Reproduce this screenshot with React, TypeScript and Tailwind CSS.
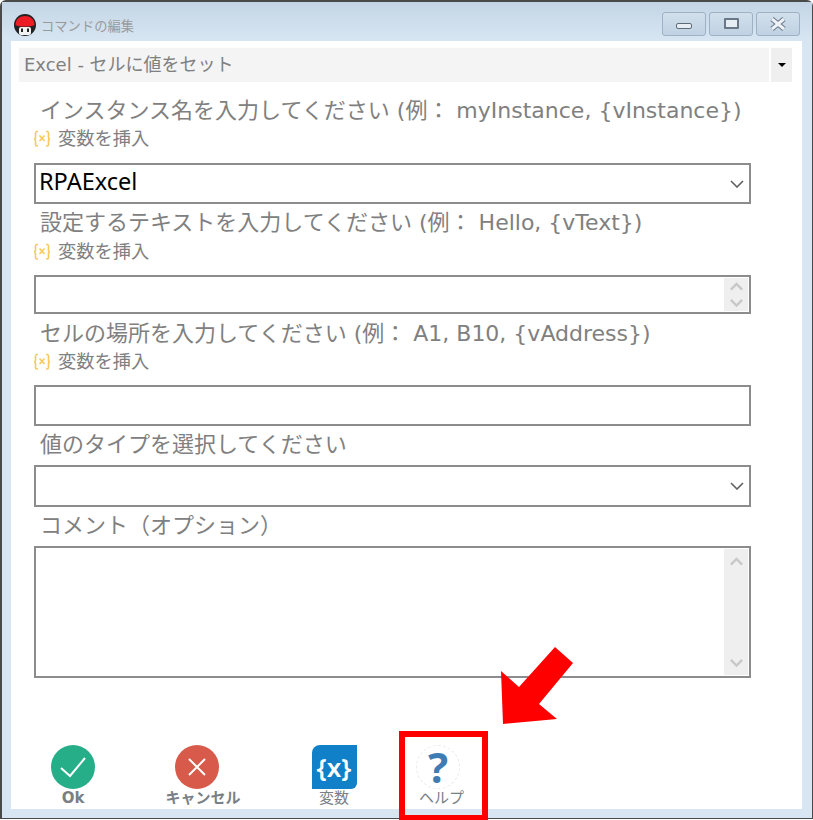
import React from "react";

function XIcon() {
  return (
    <svg width="18" height="20" viewBox="0 0 18 20" fill="none" stroke="#f8c95a" strokeWidth="1.6">
      <path d="M5 2.5H3.5C2.5 2.5 2.5 3.5 2.5 4.5V8C2.5 9 2 10 1 10C2 10 2.5 11 2.5 12V15.5C2.5 16.5 3 17 4 17H5" />
      <path d="M13 2.5H14.5C15.5 2.5 15.5 3.5 15.5 4.5V8C15.5 9 16 10 17 10C16 10 15.5 11 15.5 12V15.5C15.5 16.5 15 17 14 17H13" />
      <path d="M6.5 6.5L11.5 12M11.5 6.5L6.5 12" />
    </svg>
  );
}

function Insert() {
  return (
    <div className="flex items-center h-[28px] pl-[22px] gap-[7px] text-[18.3px] text-[#808080]">
      <XIcon />
      <span className="leading-[32px]">変数を挿入</span>
    </div>
  );
}

function Label({ children }: { children: React.ReactNode }) {
  return <div className="h-[30px] leading-[32px] pl-[29px] text-[22px] text-[#808080] whitespace-nowrap">{children}</div>;
}

function Chevron({ up, color = "#c8c8c8", size = 16 }: { up?: boolean; color?: string; size?: number }) {
  return (
    <svg width={size} height={size * 0.7} viewBox="0 0 16 11" fill="none" stroke={color} strokeWidth="2.6">
      <path d={up ? "M2 9L8 3L14 9" : "M2 2L8 8L14 2"} />
    </svg>
  );
}

function Box({ h, children }: { h: string; children?: React.ReactNode }) {
  return (
    <div className={`ml-[23px] w-[717px] ${h} border-2 border-[#8c8c8c] bg-white flex items-stretch`}>{children}</div>
  );
}

function SelectBox({ h, text }: { h: string; text?: string }) {
  return (
    <Box h={h}>
      <div className="flex-1 pl-[3px] text-[23.5px] leading-[32px] text-black font-['Noto_Sans','Noto_Sans_CJK_JP',sans-serif]">{text}</div>
      <div className="w-[24px] flex items-center justify-center">
        <svg width="14" height="8" viewBox="0 0 14 8" fill="none" stroke="#606060" strokeWidth="1.6">
          <path d="M1 1L7 7L13 1" />
        </svg>
      </div>
    </Box>
  );
}

function WinBtn({ children }: { children: React.ReactNode }) {
  return (
    <div className="w-[44px] h-[24px] rounded-[3px] border border-[#9fb1c4] bg-gradient-to-b from-[#d2e0ec] to-[#bfd1e2] flex items-center justify-center">
      {children}
    </div>
  );
}

function FootBtn({ w, label, bold, labelClass = "", children }: { w: string; label: string; bold?: boolean; labelClass?: string; children: React.ReactNode }) {
  return (
    <div className={`${w} flex flex-col items-center`}>
      <div className="h-[44px] flex items-center justify-center">{children}</div>
      <div className={`-mt-[1px] text-[15px] leading-[20px] text-[#7a7f86] whitespace-nowrap ${bold ? "font-bold" : ""} ${labelClass}`}>{label}</div>
    </div>
  );
}

export default function App() {
  return (
    <div className="relative w-[813px] h-[820px] overflow-hidden bg-white font-['DejaVu_Sans','Noto_Sans_CJK_JP',sans-serif]">
      <div className="w-[813px] h-[819px] flex flex-col border-2 border-b border-[#4a4a4a] rounded-t-[6px] border-r-[1px] bg-[#d8e6f3]">
        {/* title bar */}
        <div className="h-[39px] shrink-0 flex items-center bg-gradient-to-b from-[#c3d5e5] to-[#d8e6f3] pt-[8px] pl-[11px] pr-[12px]">
          <svg width="24" height="24" viewBox="0 0 24 24">
            <circle cx="12" cy="11" r="11" fill="#222" />
            <path d="M2.5 11C2.5 5 7 2 12 2S21.5 5 21.5 11C18 13 6 13 2.5 11Z" fill="#ee1c25" />
            <rect x="6" y="13" width="12" height="8" rx="2" fill="#f3f3f3" />
            <rect x="8" y="14.5" width="2" height="3.5" fill="#222" />
            <rect x="14" y="14.5" width="2" height="3.5" fill="#222" />
          </svg>
          <span className="ml-[4px] text-[13.3px] text-[#9a9a9a] font-['Noto_Sans_CJK_JP',sans-serif]">コマンドの編集</span>
          <div className="ml-auto flex gap-[3px] -mt-[4px]">
            <WinBtn>
              <div className="w-[16px] h-[6px] bg-[#e6edf3] border border-[#5e6c7a] rounded-[2px] mt-[5px]" />
            </WinBtn>
            <WinBtn>
              <div className="w-[15px] h-[11px] border-2 border-[#6a7786] bg-[#e6edf3] rounded-[1px]" />
            </WinBtn>
            <WinBtn>
              <svg width="18" height="14" viewBox="0 0 18 14" fill="none">
                <path d="M3 2L15 12M15 2L3 12" stroke="#6a7786" strokeWidth="5" />
                <path d="M3 2L15 12M15 2L3 12" stroke="#eef2f6" strokeWidth="3" />
              </svg>
            </WinBtn>
          </div>
        </div>

        {/* client */}
        <div className="ml-[9px] mr-[9px] w-[791px] h-[768px] bg-white flex flex-col">
          <div className="mt-[7px] ml-[8px] flex h-[34px] shrink-0 gap-[2px]">
            <div className="w-[750px] bg-[#f4f4f4] pl-[5px] text-[18px] leading-[34px] text-[#808080] whitespace-nowrap">Excel - セルに値をセット</div>
            <div className="w-[21px] bg-[#efefef] flex items-center justify-center">
              <div className="w-0 h-0 border-l-[4px] border-r-[4px] border-t-[4px] border-l-transparent border-r-transparent border-t-black" />
            </div>
          </div>

          <div className="mt-[13px]">
            <Label>インスタンス名を入力してください (例： myInstance, {"{vInstance}"})</Label>
          </div>
          <Insert />
          <div className="mt-[10px]">
            <SelectBox h="h-[41px]" text="RPAExcel" />
          </div>

          <div className="mt-[3px]">
            <Label>設定するテキストを入力してください (例： Hello, {"{vText}"})</Label>
          </div>
          <div className="mt-[1px]">
            <Insert />
          </div>
          <div className="mt-[9px]">
            <Box h="h-[39px]">
              <div className="flex-1" />
              <div className="w-[24px] my-[1px] mr-[1px] bg-[#efefef] flex flex-col items-center justify-center gap-[6px]">
                <Chevron up size={15} />
                <Chevron size={15} />
              </div>
            </Box>
          </div>

          <div className="mt-[4px]">
            <Label>セルの場所を入力してください (例： A1, B10, {"{vAddress}"})</Label>
          </div>
          <Insert />
          <div className="mt-[9px]">
            <Box h="h-[41px]" />
          </div>

          <div className="mt-[3px]">
            <Label>値のタイプを選択してください</Label>
          </div>
          <div className="mt-[6px]">
            <SelectBox h="h-[42px]" />
          </div>

          <div className="mt-[3px]">
            <Label>コメント（オプション）</Label>
          </div>
          <div className="mt-[6px]">
            <Box h="h-[132px]">
              <div className="flex-1" />
              <div className="w-[24px] my-[1px] mr-[1px] bg-[#efefef] flex flex-col items-center justify-between py-[7px]">
                <Chevron up size={15} />
                <Chevron size={15} />
              </div>
            </Box>
          </div>

          {/* footer */}
          <div className="mt-[67px] flex items-start">
            <FootBtn w="w-[124px]" label="Ok" bold>
              <svg width="44" height="44" viewBox="0 0 44 44">
                <circle cx="22" cy="22" r="22" fill="#25ae88" />
                <path d="M10 23L19 31L34 13" fill="none" stroke="#fff" strokeWidth="2" />
              </svg>
            </FootBtn>
            <FootBtn w="w-[124px]" label="キャンセル" bold labelClass="ml-[12px]">
              <svg width="44" height="44" viewBox="0 0 44 44">
                <circle cx="22" cy="22" r="22" fill="#d75a4a" />
                <path d="M14 14L30 30M30 14L14 30" fill="none" stroke="#fff" strokeWidth="2" />
              </svg>
            </FootBtn>
            <FootBtn w="w-[150px]" label="変数">
              <div className="w-[45px] h-[44px] bg-[#1081c8] rounded-tl-[8px] rounded-br-[6px] flex items-center justify-center text-white text-[26px] font-semibold leading-none whitespace-nowrap font-['Noto_Sans',sans-serif]">
                {"{x}"}
              </div>
            </FootBtn>
            <FootBtn w="w-[58px]" label="ヘルプ" labelClass="ml-[7px]">
              <div className="w-[44px] h-[44px] rounded-full border border-dashed border-[#e6ebf0] flex items-center justify-center text-[#3f7cb4] text-[42px] font-bold leading-none font-['Noto_Sans',sans-serif]">
                ?
              </div>
            </FootBtn>
          </div>
        </div>
      </div>

      {/* annotations */}
      <div className="absolute left-[399px] top-[731px] w-[89px] h-[89px] border-[6px] border-[#ff0000] border-b-[5px]" />
      <svg className="absolute left-0 top-0 pointer-events-none" width="813" height="820">
        <polygon points="501,671 503,724 557,719 539,704 573,663 555,647 519,687" fill="#ff0000" />
      </svg>
    </div>
  );
}
